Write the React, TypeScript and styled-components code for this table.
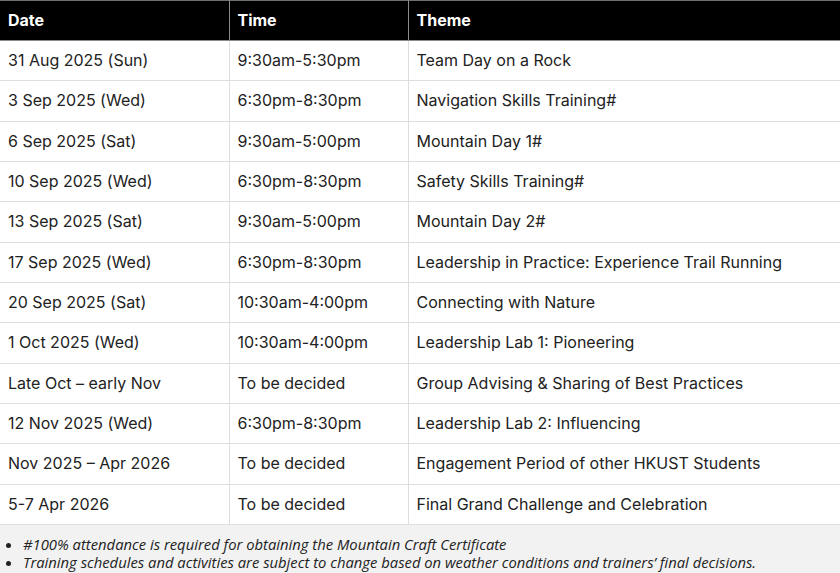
import styled, { createGlobalStyle } from "styled-components";

const GlobalStyle = createGlobalStyle`
    body {
        margin: 0;
        background: #ffffff;
        font-family: Inter, "Noto Sans", sans-serif;
    }
`;

const Wrapper = styled.div`
    width: 840px;
    height: 573px;
    overflow: hidden;
    background: #f2f2f2;
`;

const Table = styled.table`
    width: 840px;
    border-collapse: collapse;
    table-layout: fixed;
    background: #ffffff;
`;

const HeadCell = styled.th<{ $w: number }>`
    width: ${props => props.$w}px;
    height: 40px;
    box-sizing: border-box;
    padding: 0 8px 1px;
    background: #000000;
    color: #ffffff;
    text-align: left;
    font-size: 16px;
    font-weight: 700;
    border: 1px solid #8a8a8a;
    border-top: 1px solid #6f6f6f;
    &:first-child { border-left: none; }
    &:last-child { border-right: none; }
`;

const Cell = styled.td`
    height: 40.33px;
    box-sizing: border-box;
    padding: 0 8px 1px;
    font-size: 16px;
    color: #222222;
    border: 1px solid #dedede;
    &:first-child { border-left: none; }
    &:last-child { border-right: none; }
`;

const Notes = styled.ul`
    margin: 0;
    padding: 10px 0 0 23px;
    font-family: "Open Sans", Lato, sans-serif;
    font-style: italic;
    font-size: 14.8px;
    line-height: 18px;
    color: #222222;
`;

interface Session {
    date: string;
    time: string;
    theme: string;
}

const sessions: Session[] = [
    { date: "31 Aug 2025 (Sun)", time: "9:30am-5:30pm", theme: "Team Day on a Rock" },
    { date: "3 Sep 2025 (Wed)", time: "6:30pm-8:30pm", theme: "Navigation Skills Training#" },
    { date: "6 Sep 2025 (Sat)", time: "9:30am-5:00pm", theme: "Mountain Day 1#" },
    { date: "10 Sep 2025 (Wed)", time: "6:30pm-8:30pm", theme: "Safety Skills Training#" },
    { date: "13 Sep 2025 (Sat)", time: "9:30am-5:00pm", theme: "Mountain Day 2#" },
    { date: "17 Sep 2025 (Wed)", time: "6:30pm-8:30pm", theme: "Leadership in Practice: Experience Trail Running" },
    { date: "20 Sep 2025 (Sat)", time: "10:30am-4:00pm", theme: "Connecting with Nature" },
    { date: "1 Oct 2025 (Wed)", time: "10:30am-4:00pm", theme: "Leadership Lab 1: Pioneering" },
    { date: "Late Oct – early Nov", time: "To be decided", theme: "Group Advising & Sharing of Best Practices" },
    { date: "12 Nov 2025 (Wed)", time: "6:30pm-8:30pm", theme: "Leadership Lab 2: Influencing" },
    { date: "Nov 2025 – Apr 2026", time: "To be decided", theme: "Engagement Period of other HKUST Students" },
    { date: "5-7 Apr 2026", time: "To be decided", theme: "Final Grand Challenge and Celebration" },
];

function App() {
    return <Wrapper>
        <GlobalStyle />
        <Table>
            <thead>
                <tr>
                    <HeadCell $w={229}>Date</HeadCell>
                    <HeadCell $w={179}>Time</HeadCell>
                    <HeadCell $w={432}>Theme</HeadCell>
                </tr>
            </thead>
            <tbody>
                {sessions.map(s => <tr key={s.date}>
                    <Cell>{s.date}</Cell>
                    <Cell>{s.time}</Cell>
                    <Cell>{s.theme}</Cell>
                </tr>)}
            </tbody>
        </Table>
        <Notes>
            <li>#100% attendance is required for obtaining the Mountain Craft Certificate</li>
            <li>Training schedules and activities are subject to change based on weather conditions and trainers’ final decisions.</li>
        </Notes>
    </Wrapper>
}

export default App;
